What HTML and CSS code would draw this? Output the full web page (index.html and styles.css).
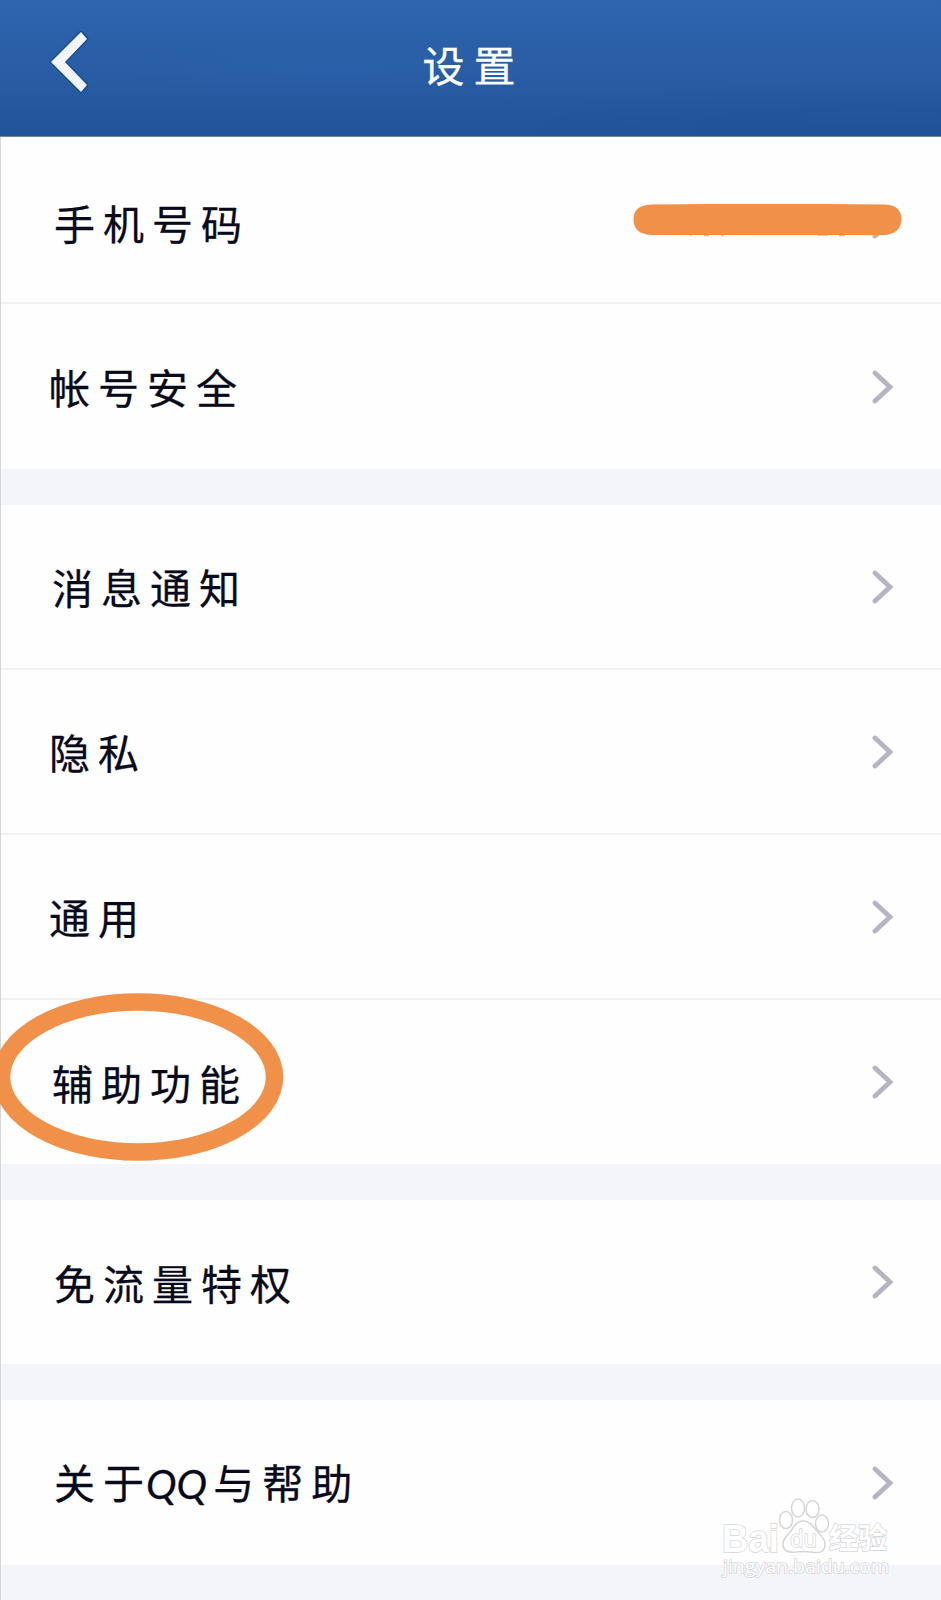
FILE: index.html
```html
<!DOCTYPE html>
<html lang="zh-CN">
<head>
<meta charset="utf-8">
<title>设置</title>
<link rel="stylesheet" href="styles.css">
</head>
<body>
<svg class="defs" width="0" height="0"><symbol id="chev" viewBox="0 0 22 34"><path d="M3 3 18 17 3 31" fill="none" stroke="#b5b5c2" stroke-width="4.800" stroke-linecap="round"/></symbol></svg>
<div class="screen">
  <header class="bar">
    <svg class="back" viewBox="0 0 44 68"><path d="M34 4 40 11 18 34 40 57 34 64 4 34Z" fill="#f1f4f9" stroke="#184c93" stroke-width="3" stroke-linejoin="round" paint-order="stroke"/></svg>
    <h1 class="title"><span>设</span><span>置</span></h1>
  </header>
  <main>
    <section class="group">
      <div class="row row-first"><span class="label inset">手机号码</span>
        <div class="redacted">
          <svg class="chev" viewBox="0 0 22 34"><use href="#chev"/></svg>
          <svg class="mask" viewBox="0 0 270 36"><path d="M58 31v1M71 31.500h5M88 31.500h3M184 31h11M206 31.500h6" stroke="#c3c3cc" stroke-width="1.500"/><path d="M18 .5Q134-.8 252 .5C264 1 268.500 7 268.500 15.500S263 30 252 31H18C6 30 .5 25 .5 15.500S6 1 18 .5Z" fill="#f19149"/></svg>
        </div>
      </div>
      <div class="row row-security"><span class="label">帐号安全</span><svg class="chev"><use href="#chev"/></svg></div>
    </section>
    <section class="group">
      <div class="row row-lead"><span class="label nudge">消息通知</span><svg class="chev"><use href="#chev"/></svg></div>
      <div class="row"><span class="label">隐私</span><svg class="chev"><use href="#chev"/></svg></div>
      <div class="row"><span class="label">通用</span><svg class="chev"><use href="#chev"/></svg></div>
      <div class="row row-access"><span class="label nudge">辅助功能</span><svg class="chev"><use href="#chev"/></svg>
        <svg class="ring" viewBox="0 0 284 168"><ellipse cx="138" cy="84" rx="136.500" ry="75" fill="none" stroke="#f19149" stroke-width="17.500"/></svg>
      </div>
    </section>
    <section class="group">
      <div class="row row-single"><span class="label inset">免流量特权</span><svg class="chev"><use href="#chev"/></svg></div>
    </section>
    <section class="group">
      <div class="row"><span class="label inset">关于<span class="latin">QQ</span>与帮助</span><svg class="chev"><use href="#chev"/></svg></div>
    </section>
  </main>
  <svg class="watermark" viewBox="0 0 180 90">
    <g fill="#fff" stroke="#d6d6da" stroke-width="1.500">
      <text class="wm-logo" x="6" y="56" font-size="39" textLength="57" lengthAdjust="spacingAndGlyphs">Bai</text>
      <ellipse cx="70" cy="24" rx="6.500" ry="8.500"/><ellipse cx="82" cy="12" rx="6.500" ry="9"/><ellipse cx="96.500" cy="13" rx="6.500" ry="8.500"/><ellipse cx="106" cy="27.500" rx="6.500" ry="8.500"/>
      <path d="M87 25c7 0 10 5 13 9 4 5 9 8 9 14 0 10-8 9-14 8-5-.8-10-.8-15 0-7 1-13-1-13-8 0-6 5-9 8-13 3-5 6-10 12-10Z"/>
      <text class="wm-du" x="74" y="51" font-size="23" textLength="27" lengthAdjust="spacingAndGlyphs">du</text>
      <text class="wm-cn" x="113" y="53" font-size="29" textLength="58">经验</text>
      <text class="wm-url" x="7" y="77" font-size="18" textLength="166" lengthAdjust="spacingAndGlyphs">jingyan.baidu.com</text>
    </g>
  </svg>
</div>
</body>
</html>
```
FILE: styles.css
```css
* { box-sizing: border-box; }
body {
  margin: 0;
  background: #f4f5fa;
  font-family: "Noto Sans CJK SC", sans-serif;
}
.defs { position: absolute; }
.screen {
  position: relative;
  width: 941px;
  height: 1600px;
  overflow: hidden;
  background: linear-gradient(90deg, #d5d6d9 1px, #f4f5fa 1px);
}
.bar {
  display: grid;
  grid-template-columns: 1fr auto 1fr;
  height: 137px;
  padding: 28px 47px 0;
  border-bottom: 1px solid #7187a9;
  background:
    radial-gradient(ellipse at 93% 100%, rgba(22, 70, 138, .2), transparent 30%),
    radial-gradient(ellipse at 35% 50%, rgba(48, 105, 184, .25), transparent 25%),
    linear-gradient(#2e65ae, #295da5 50%, #205499);
}
.back { width: 44px; height: 68px; }
.title {
  display: flex;
  gap: 9px;
  margin: 15px 0 0 -3px;
  color: #fff;
  font-size: 42px;
  font-weight: 400;
  line-height: 42px;
  -webkit-text-stroke: .3px #fff;
}
.group {
  margin: 0 0 36px 1px;
  background: #fefefe;
}
.row {
  position: relative;
  display: flex;
  align-items: center;
  justify-content: space-between;
  height: 165px;
  padding: 0 47px 0 48px;
}
.row + .row { border-top: 2px solid #f0f1f2; }
.row-security { height: 167px; }
.row-lead { height: 163px; }
.row-single { height: 164px; }
.label {
  padding-bottom: 1px;
  color: #080a1c;
  font-size: 41px;
  line-height: 50px;
  letter-spacing: 8px;
  white-space: nowrap;
  -webkit-text-stroke: .3px #080a1c;
}
.row-first .label { padding-top: 5px; }
.inset { padding-left: 5px; }
.nudge { padding-left: 3px; }
.latin {
  font-family: Lato, sans-serif;
  font-style: italic;
  letter-spacing: 0;
  margin: 0 6px 0 -6px;
}
.row-access { height: 166px; }
.chev { flex: none; width: 22px; height: 34px; }
.redacted {
  position: relative;
  display: flex;
  justify-content: flex-end;
  width: 270px;
  padding-top: 4px;
}
.mask {
  position: absolute;
  right: -9px;
  top: 3px;
  width: 270px;
  height: 36px;
}
.ring {
  position: absolute;
  left: -1px;
  top: -7px;
  width: 284px;
  height: 168px;
}
.watermark {
  position: absolute;
  left: 716px;
  top: 1496px;
  width: 180px;
  height: 90px;
}
.watermark text { paint-order: stroke; }
.wm-logo { font-family: "Liberation Sans", sans-serif; font-weight: 700; }
.wm-du { font-family: "Open Sans", sans-serif; }
.wm-cn { font-family: "Noto Sans CJK SC", sans-serif; font-weight: 700; }
.wm-url { font-family: "Open Sans", sans-serif; }
```
